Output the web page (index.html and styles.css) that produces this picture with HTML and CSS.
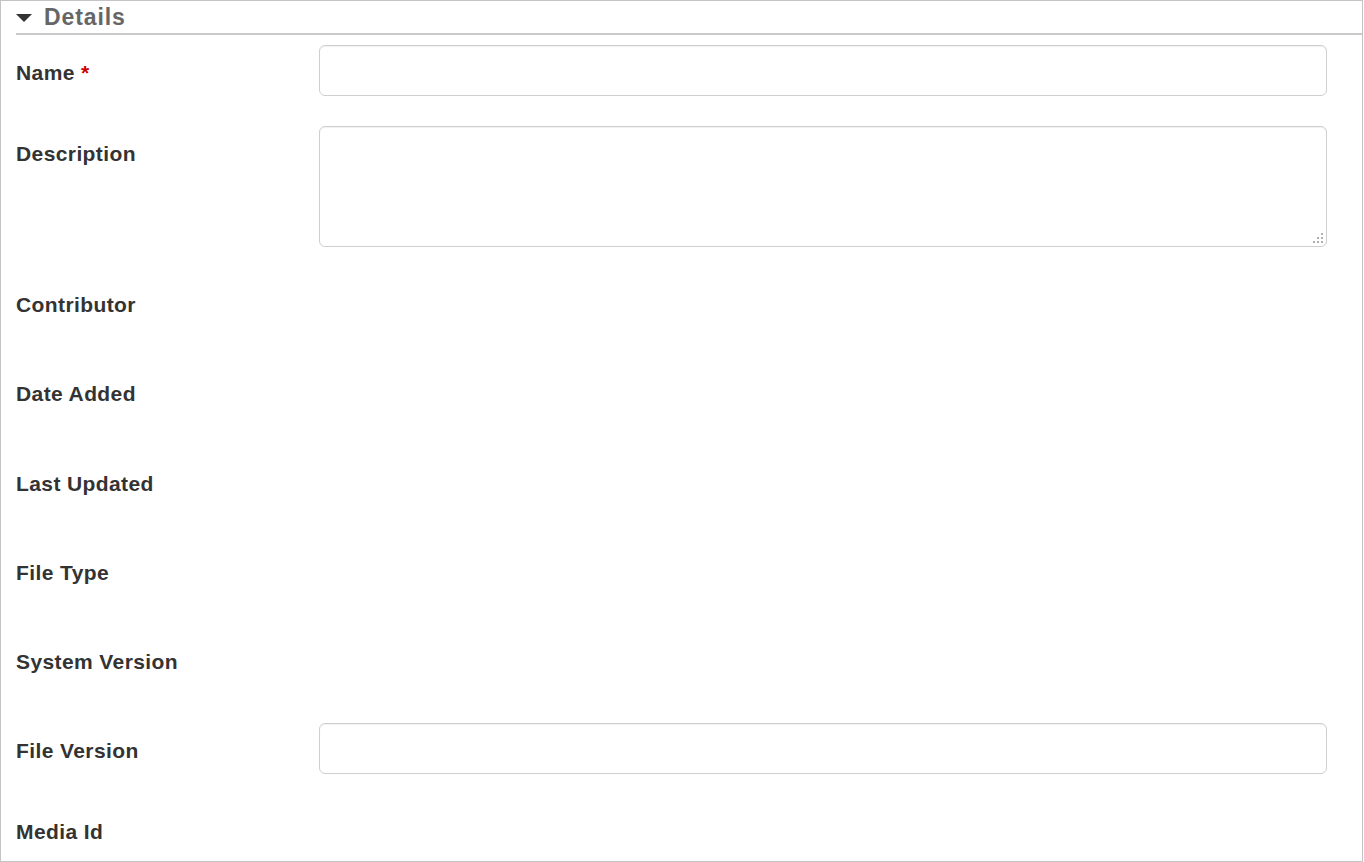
FILE: index.html
```html
<!DOCTYPE html>
<html>
<head>
<meta charset="utf-8">
<link rel="stylesheet" href="styles.css">
</head>
<body>
<div class="panel">
  <div class="header">
    <svg class="caret" width="16" height="8" viewBox="0 0 16 8"><path d="M0 0 L16 0 L8 8 Z" fill="#333"/></svg>
    <span class="title">Details</span>
  </div>
  <div class="form">
    <div class="row">
      <div class="label">Name <span class="req">*</span></div>
      <div class="value"><input class="input" type="text"></div>
    </div>
    <div class="row">
      <div class="label">Description</div>
      <div class="value area-wrap">
        <textarea class="textarea"></textarea>
        <svg class="grip" width="10" height="10" viewBox="0 0 10 10" fill="#b0b0b0">
          <rect x="8" y="0" width="2" height="2"/>
          <rect x="4" y="4" width="2" height="2"/><rect x="8" y="4" width="2" height="2"/>
          <rect x="0" y="8" width="2" height="2"/><rect x="4" y="8" width="2" height="2"/><rect x="8" y="8" width="2" height="2"/>
        </svg>
      </div>
    </div>
    <div class="row">
      <div class="label">Contributor</div>
      <div class="value static"></div>
    </div>
    <div class="row">
      <div class="label">Date Added</div>
      <div class="value static"></div>
    </div>
    <div class="row">
      <div class="label">Last Updated</div>
      <div class="value static"></div>
    </div>
    <div class="row">
      <div class="label">File Type</div>
      <div class="value static"></div>
    </div>
    <div class="row">
      <div class="label">System Version</div>
      <div class="value static"></div>
    </div>
    <div class="row">
      <div class="label">File Version</div>
      <div class="value"><input class="input" type="text"></div>
    </div>
    <div class="row">
      <div class="label">Media Id</div>
      <div class="value static"></div>
    </div>
  </div>
</div>
</body>
</html>
```

FILE: styles.css
```css
html, body {
  margin: 0;
  padding: 0;
  background: #fff;
}
.panel {
  width: 1363px;
  height: 862px;
  box-sizing: border-box;
  border: 1px solid #c4c4c4;
  padding-left: 15px;
  overflow: hidden;
  font-family: "Liberation Sans", Arial, sans-serif;
}
.header {
  display: flex;
  align-items: center;
  height: 32px;
  border-bottom: 2px solid #cacaca;
}
.caret {
  display: block;
  margin-right: 12px;
  margin-top: 1px;
}
.title {
  font-size: 23px;
  font-weight: bold;
  color: #666;
  letter-spacing: 0.9px;
  line-height: 32px;
}
.form {
  padding-top: 10px;
  padding-right: 35px;
}
.row {
  display: flex;
  margin-bottom: 30px;
}
.label {
  width: 303px;
  flex: none;
  padding-top: 16px;
  line-height: 24px;
  font-size: 21px;
  font-weight: bold;
  color: #333;
  letter-spacing: 0.4px;
}
.req {
  color: #cc0000;
}
.value {
  flex: 1;
}
.area-wrap {
  position: relative;
}
.grip {
  position: absolute;
  right: 4px;
  bottom: 4px;
  display: block;
}
.static {
  height: 59.3px;
}
.input, .textarea {
  display: block;
  width: 100%;
  box-sizing: border-box;
  border: 1px solid #cfcfcf;
  border-radius: 6px;
  box-shadow: inset 0 1px 1px rgba(0,0,0,0.06);
  background: #fff;
  margin: 0;
  padding: 6px 12px;
  font-family: "Liberation Sans", Arial, sans-serif;
  font-size: 16px;
}
.input {
  height: 51px;
}
.textarea {
  height: 121px;
  resize: none;
}
```
